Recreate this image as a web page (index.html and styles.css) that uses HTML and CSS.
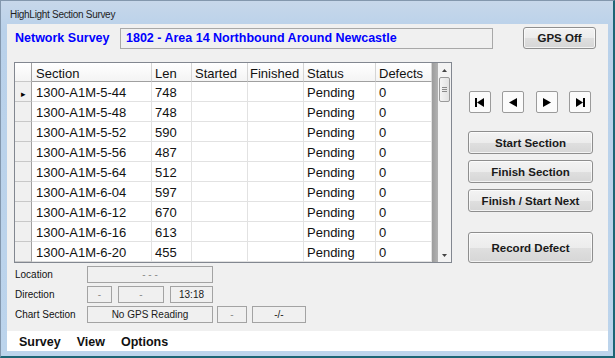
FILE: index.html
```html
<!DOCTYPE html>
<html lang="en">
<head>
    <meta charset="UTF-8">
    <title>HighLight Section Survey</title>
    <link rel="stylesheet" href="styles.css">
</head>
<body>
<div class="window">
    <div class="titlebar">HighLight Section Survey</div>

    <div class="client">
        <div class="form">
            <div class="toprow">
                <span class="survey-label">Network Survey</span>
                <div class="survey-box">1802 - Area 14 Northbound Around Newcastle</div>
                <button class="win-btn gps-btn">GPS Off</button>
            </div>

            <div class="main">
                <div class="grid">
                    <div class="grid-body">
                        <div class="grow ghead">
                            <div class="cell rh"></div>
                            <div class="cell">Section</div>
                            <div class="cell">Len</div>
                            <div class="cell">Started</div>
                            <div class="cell">Finished</div>
                            <div class="cell">Status</div>
                            <div class="cell">Defects</div>
                        </div>
                        <div class="grow">
                            <div class="cell rh"><span class="current">&#9656;</span></div>
                            <div class="cell">1300-A1M-5-44</div><div class="cell">748</div><div class="cell"></div><div class="cell"></div><div class="cell">Pending</div><div class="cell">0</div>
                        </div>
                        <div class="grow">
                            <div class="cell rh"></div>
                            <div class="cell">1300-A1M-5-48</div><div class="cell">748</div><div class="cell"></div><div class="cell"></div><div class="cell">Pending</div><div class="cell">0</div>
                        </div>
                        <div class="grow">
                            <div class="cell rh"></div>
                            <div class="cell">1300-A1M-5-52</div><div class="cell">590</div><div class="cell"></div><div class="cell"></div><div class="cell">Pending</div><div class="cell">0</div>
                        </div>
                        <div class="grow">
                            <div class="cell rh"></div>
                            <div class="cell">1300-A1M-5-56</div><div class="cell">487</div><div class="cell"></div><div class="cell"></div><div class="cell">Pending</div><div class="cell">0</div>
                        </div>
                        <div class="grow">
                            <div class="cell rh"></div>
                            <div class="cell">1300-A1M-5-64</div><div class="cell">512</div><div class="cell"></div><div class="cell"></div><div class="cell">Pending</div><div class="cell">0</div>
                        </div>
                        <div class="grow">
                            <div class="cell rh"></div>
                            <div class="cell">1300-A1M-6-04</div><div class="cell">597</div><div class="cell"></div><div class="cell"></div><div class="cell">Pending</div><div class="cell">0</div>
                        </div>
                        <div class="grow">
                            <div class="cell rh"></div>
                            <div class="cell">1300-A1M-6-12</div><div class="cell">670</div><div class="cell"></div><div class="cell"></div><div class="cell">Pending</div><div class="cell">0</div>
                        </div>
                        <div class="grow">
                            <div class="cell rh"></div>
                            <div class="cell">1300-A1M-6-16</div><div class="cell">613</div><div class="cell"></div><div class="cell"></div><div class="cell">Pending</div><div class="cell">0</div>
                        </div>
                        <div class="grow">
                            <div class="cell rh"></div>
                            <div class="cell">1300-A1M-6-20</div><div class="cell">455</div><div class="cell"></div><div class="cell"></div><div class="cell">Pending</div><div class="cell">0</div>
                        </div>
                    </div>
                    <div class="grid-gap"></div>
                    <div class="vscroll">
                        <div class="arrow">
                            <svg width="5" height="3" viewBox="0 0 5 3"><path d="M0 3 L2.5 0 L5 3 Z" fill="#444"/></svg>
                        </div>
                        <div class="thumb">
                            <svg width="5" height="5" viewBox="0 0 5 5"><path d="M0 0.5 H5 M0 2.5 H5 M0 4.5 H5" stroke="#8a8a8a" stroke-width="1"/></svg>
                        </div>
                        <div class="track"></div>
                        <div class="arrow">
                            <svg width="5" height="3" viewBox="0 0 5 3"><path d="M0 0 L2.5 3 L5 0 Z" fill="#444"/></svg>
                        </div>
                    </div>
                </div>

                <div class="side">
                    <div class="nav">
                        <button class="nav-btn">
                            <svg width="10" height="9" viewBox="0 0 10 9"><rect x="0" y="0" width="2" height="9" fill="#000"/><path d="M2 4.5 L9 0 L9 9 Z" fill="#000"/></svg>
                        </button>
                        <button class="nav-btn">
                            <svg width="8" height="9" viewBox="0 0 8 9"><path d="M0 4.5 L8 0 L8 9 Z" fill="#000"/></svg>
                        </button>
                        <button class="nav-btn">
                            <svg width="8" height="9" viewBox="0 0 8 9"><path d="M0 0 L8 4.5 L0 9 Z" fill="#000"/></svg>
                        </button>
                        <button class="nav-btn">
                            <svg width="10" height="9" viewBox="0 0 10 9"><path d="M1 0 L8 4.5 L1 9 Z" fill="#000"/><rect x="8" y="0" width="2" height="9" fill="#000"/></svg>
                        </button>
                    </div>
                    <button class="win-btn action first">Start Section</button>
                    <button class="win-btn action">Finish Section</button>
                    <button class="win-btn action">Finish / Start Next</button>
                    <button class="win-btn action tall">Record Defect</button>
                </div>
            </div>

            <div class="status">
                <div class="srow">
                    <span class="slabel">Location</span>
                    <div class="sbox w126 dim">- - -</div>
                </div>
                <div class="srow">
                    <span class="slabel">Direction</span>
                    <div class="sbox w25 dim">-</div>
                    <div class="sbox w46 dim gap6">-</div>
                    <div class="sbox w43 gap6">13:18</div>
                </div>
                <div class="srow">
                    <span class="slabel">Chart Section</span>
                    <div class="sbox w126">No GPS Reading</div>
                    <div class="sbox w30 dim gap4">-</div>
                    <div class="sbox w54 gap5">-/-</div>
                </div>
            </div>
        </div>

        <div class="menubar">
            <span class="menu-item">Survey</span>
            <span class="menu-item">View</span>
            <span class="menu-item">Options</span>
        </div>
    </div>
</div>
</body>
</html>
```

FILE: styles.css
```css
* {
    box-sizing: border-box;
}

body {
    margin: 0;
    font-family: "Liberation Sans", Arial, sans-serif;
    background-color: #1d6575;
}

.window {
    width: 615px;
    height: 358px;
    display: flex;
    flex-direction: column;
    padding: 0 5px 5px 6px;
    border-style: solid;
    border-width: 1px 2px 2px 1px;
    border-color: #8397ad #1d6575 #1d6575 #8397ad;
    background: linear-gradient(to bottom, #c7d7ea 0px, #b9d1ea 30px, #bcd4ec 100%);
}

.titlebar {
    height: 23px;
    padding: 3px 0 0 3px;
    display: flex;
    align-items: center;
    font-size: 10px;
    letter-spacing: -0.3px;
    color: #1e1e1e;
}

.client {
    flex: 1;
    display: flex;
    flex-direction: column;
    background-color: #f0f0f0;
}

.form {
    flex: 1;
}

/* top row */
.toprow {
    display: flex;
    align-items: flex-start;
    height: 25px;
    padding: 3px 0 0 8px;
}

.survey-label {
    width: 105px;
    margin-top: 4px;
    font-size: 12.5px;
    font-weight: bold;
    color: #0000ff;
}

.survey-box {
    width: 373px;
    height: 21px;
    margin-top: 1px;
    padding: 2px 0 0 5px;
    border: 1px solid #a8a8a8;
    background-color: #f0f0f0;
    font-size: 12.5px;
    font-weight: bold;
    color: #0000ff;
}

.win-btn {
    font-family: "Liberation Sans", Arial, sans-serif;
    font-size: 11.5px;
    font-weight: bold;
    color: #1a1a1a;
    border: 1px solid #8e8e8e;
    border-radius: 3px;
    background: linear-gradient(to bottom, #f3f3f3 0%, #ececec 50%, #dfdfdf 51%, #d6d6d6 100%);
    box-shadow: inset 0 0 0 1px rgba(255, 255, 255, 0.7);
    padding: 0;
}

.gps-btn {
    width: 73px;
    height: 22px;
    margin-left: 30px;
}

/* grid + side panel */
.main {
    display: flex;
    height: 201px;
    margin-top: 13px;
}

.grid {
    display: flex;
    width: 438px;
    height: 201px;
    margin-left: 7px;
    border: 1px solid #828790;
    background-color: #ababab;
}

.grid-body {
    width: 417px;
    background-color: #fff;
}

.grow {
    display: grid;
    grid-template-columns: 17px 120px 40px 56px 56px 72px 56px;
    height: 20px;
}

.cell {
    border-right: 1px solid #e2e2e2;
    border-bottom: 1px solid #e2e2e2;
    padding: 0 0 0 3px;
    font-size: 13px;
    line-height: 22px;
    color: #111;
    white-space: nowrap;
    overflow: hidden;
}

.grow .cell:nth-child(2) {
    padding-left: 4px;
}

.ghead {
    height: 19px;
}

.ghead .cell {
    line-height: 21px;
    background: linear-gradient(to bottom, #ffffff, #f4f4f4);
    border-right-color: #d5d5d5;
    border-bottom-color: #a0a0a0;
}

.ghead .cell:nth-child(5) {
    padding-left: 2px;
}

.cell.rh {
    background-color: #f0f0f0;
    border-right-color: #a0a0a0;
    border-bottom-color: #c8c8c8;
    padding: 0;
    text-align: center;
}

.current {
    font-size: 9px;
    line-height: 20px;
    color: #000;
}

.grid-gap {
    width: 6px;
    background: linear-gradient(to right, #9c9c9c, #b2b2b2);
}

.vscroll {
    width: 13px;
    display: flex;
    flex-direction: column;
    background-color: #f3f3f3;
}

.arrow {
    height: 14px;
    display: flex;
    align-items: center;
    justify-content: center;
}

.thumb {
    height: 25px;
    margin: 0 1px 0 1px;
    border: 1px solid #9a9a9a;
    border-radius: 2px;
    background: linear-gradient(to right, #f4f4f4, #e2e2e2);
    display: flex;
    align-items: center;
    justify-content: center;
}

.track {
    flex: 1;
}

.side {
    width: 125px;
    margin-left: 16px;
    padding-top: 29px;
    display: flex;
    flex-direction: column;
}

.nav {
    display: flex;
    justify-content: space-between;
    padding: 0 2px 0 1px;
}

.nav-btn {
    width: 22px;
    height: 22px;
    padding: 0;
    border: 1px solid #9b9b9b;
    border-radius: 2px;
    background-color: #fbfbfb;
    display: flex;
    align-items: center;
    justify-content: center;
}

.action {
    height: 23px;
    margin-top: 6px;
}

.action.first {
    margin-top: 18px;
}

.action.tall {
    height: 31px;
    margin-top: 20px;
}

/* status rows */
.status {
    display: flex;
    flex-direction: column;
    gap: 3px;
    margin-top: 3px;
    padding-left: 8px;
}

.srow {
    display: flex;
    align-items: center;
    height: 17px;
}

.slabel {
    width: 72px;
    font-size: 10px;
    color: #111;
}

.sbox {
    height: 17px;
    border: 1px solid #a3a3a3;
    font-size: 10px;
    line-height: 15px;
    text-align: center;
    color: #1a1a1a;
}

.sbox.dim {
    color: #8a8a8a;
}

.w126 { width: 126px; }
.w25 { width: 25px; }
.w46 { width: 46px; }
.w43 { width: 43px; }
.w30 { width: 30px; }
.w54 { width: 54px; }

.gap4 { margin-left: 4px; }
.gap5 { margin-left: 5px; }
.gap6 { margin-left: 6px; }

/* menu */
.menubar {
    height: 20px;
    background-color: #fff;
    display: flex;
    align-items: center;
    gap: 16px;
    padding: 2px 0 0 12px;
}

.menu-item {
    font-size: 12.5px;
    font-weight: bold;
    color: #111;
}
```
